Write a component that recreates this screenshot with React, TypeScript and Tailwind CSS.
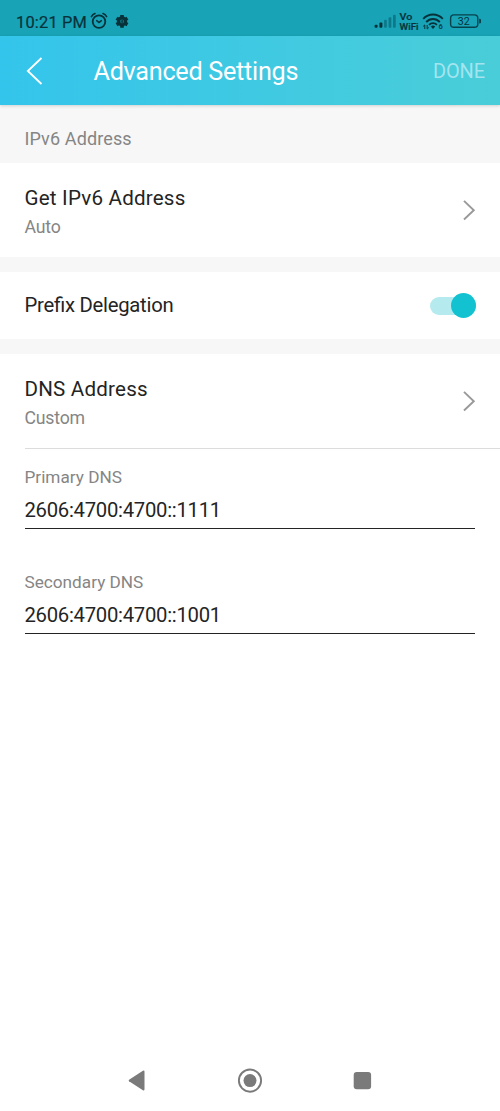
import React from 'react';

function StatusIcons() {
  return (
    <svg className="block" width="112" height="36" viewBox="372 0 112 36" fill="none">
      <g fill="#07323a">
        <rect x="374.6" y="24.8" width="3" height="3" rx="1" />
        <rect x="379.4" y="22.6" width="3" height="5.2" rx="1" />
      </g>
      <g fill="#0d7888">
        <rect x="384.1" y="19.8" width="2.7" height="8" rx="1" />
        <rect x="388.6" y="17.2" width="2.7" height="10.6" rx="1" />
        <rect x="393" y="14.8" width="2.7" height="13" rx="1" />
      </g>
      <g fill="#07323a" fontFamily="Roboto, sans-serif" fontWeight="500">
        <text x="399.6" y="19.6" fontSize="9.6" textLength="12.8" lengthAdjust="spacingAndGlyphs" stroke="#07323a" strokeWidth=".2">Vo</text>
        <text x="399.6" y="29.6" fontSize="9.4" textLength="19" lengthAdjust="spacingAndGlyphs" stroke="#07323a" strokeWidth=".2">WiFi</text>
        <text x="438.6" y="29.2" fontSize="7.5">6</text>
      </g>
      <g stroke="#07323a" strokeWidth="1.9">
        <path d="M423.2 18.9C428.8 13.1 437.2 13.1 442.8 18.9" />
        <path d="M426.2 22C430 17.9 436 17.9 439.8 22" />
        <path d="M429.1 24.9C431.3 22.5 434.7 22.5 436.9 24.9" />
      </g>
      <path d="M430.8 26.4Q433 24.8 435.2 26.4L433 29Z" fill="#07323a" />
      <path d="M424.8 29v-4M423.2 26.4l1.6-1.5M427.2 25v4M428.8 27.5l-1.6 1.5" stroke="#07323a" strokeWidth="1" />
      <rect x="450.6" y="14.9" width="27.2" height="12.4" rx="3.4" stroke="#07424c" strokeWidth="1.4" />
      <path d="M479.2 18.8q1.8 0 1.8 1v2.6q0 1-1.8 1z" fill="#07424c" />
      <text x="463.8" y="25.4" textAnchor="middle" fontSize="11.8" textLength="12" lengthAdjust="spacingAndGlyphs" fontFamily="Roboto, sans-serif" fill="#07323a">32</text>
    </svg>
  );
}

function ClockAndGear() {
  return (
    <svg className="block" width="42" height="36" viewBox="89 0 42 36" fill="none">
      <g stroke="#07323a" strokeLinecap="round">
        <circle cx="99" cy="21.6" r="6.3" strokeWidth="1.8" />
        <path d="M96.7 20.6l2.3 2 2.4-2" strokeWidth="1.4" />
        <path d="M91.4 16.6q1.3-2.2 3.6-3.1M106.6 16.6q-1.3-2.2-3.6-3.1" strokeWidth="1.6" />
      </g>
      <g stroke="#07323a" strokeWidth="3.6">
        <path d="M122 15v12.8M116.5 18.2l11 6.4M127.5 18.2l-11 6.4" />
      </g>
      <circle cx="122" cy="21.4" r="5.1" fill="#07323a" />
      <circle cx="122" cy="21.4" r="1.9" fill="#128394" />
      <path d="M120.8 22.3l1.6-2.4v3.2M120.8 22h2.4" stroke="#07323a" strokeWidth=".7" />
    </svg>
  );
}

function Chevron() {
  return (
    <svg width="14" height="22" viewBox="0 0 14 22" fill="none" stroke="#999" strokeWidth="1.9">
      <path d="M2 1.9L11.8 11.2L2 20.5" />
    </svg>
  );
}

function LinkRow({ title, value }: { title: string; value: string }) {
  return (
    <div className="flex h-[94px] items-center justify-between bg-white pr-[24.5px] pl-[24.5px]">
      <div className="pt-[4px]">
        <div className="text-[20.6px] leading-[30px] tracking-[0.2px] text-[#242424]">{title}</div>
        <div className="text-[17.7px] leading-[28px] tracking-[-0.2px] text-[#858585]">{value}</div>
      </div>
      <Chevron />
    </div>
  );
}

function Field({ label, value }: { label: string; value: string }) {
  return (
    <div className="mr-[25px] ml-[24.5px]">
      <div className="text-[17.2px] leading-[26px] text-[#858585]">{label}</div>
      <div className="h-[39px] border-b border-[#242424] text-[20.3px] leading-[41px] tracking-[-0.28px] text-[#242424]">{value}</div>
    </div>
  );
}

export default function App() {
  return (
    <div className="flex h-[1111px] w-[500px] flex-col overflow-hidden bg-white font-[Roboto,sans-serif]">
      <div className="flex h-9 shrink-0 justify-between bg-[#18a3b7] pr-4 pl-4">
        <div className="flex">
          <span className="w-[73px] pt-[9px] text-[16.4px] leading-7 tracking-[0.2px] whitespace-nowrap text-[#07323a] [-webkit-text-stroke:0.2px_#07323a]">10:21 PM</span>
          <ClockAndGear />
        </div>
        <StatusIcons />
      </div>
      <header className="z-10 flex h-[69px] shrink-0 items-center bg-linear-to-r from-[#34c5ec] to-[#49cdd8] pr-[15px] pl-[25px] shadow-[0_1px_3px_rgba(0,0,0,0.16)]">
        <svg width="18" height="28" viewBox="0 0 18 28" fill="none" stroke="white" strokeWidth="1.8">
          <path d="M16.5 1L2.8 14L16.5 27" />
        </svg>
        <h1 className="ml-[50.5px] flex-1 pt-[2px] text-[25.2px] leading-8 tracking-[-0.27px] text-white">Advanced Settings</h1>
        <span className="text-[20px] leading-8 tracking-[-0.1px] text-[#a2e5ef]">DONE</span>
      </header>
      <div className="h-[58px] shrink-0 bg-[#f7f7f7] pt-[19px] pl-[24.5px] text-[18px] leading-[30px] tracking-[0.12px] text-[#858585]">IPv6 Address</div>
      <LinkRow title="Get IPv6 Address" value="Auto" />
      <div className="h-[15px] shrink-0 bg-[#f7f7f7]" />
      <div className="flex h-[67px] shrink-0 items-center justify-between pr-[24.5px] pl-[24.5px]">
        <span className="text-[20.3px] tracking-[-0.26px] text-[#242424]">Pre&#xFB01;x Delegation</span>
        <div className="flex h-[18px] w-[46px] items-center justify-end rounded-full bg-[#b5ebef]">
          <div className="size-[25px] shrink-0 rounded-full bg-[#12c2d1]" />
        </div>
      </div>
      <div className="h-[15px] shrink-0 bg-[#f7f7f7]" />
      <LinkRow title="DNS Address" value="Custom" />
      <div className="ml-[24.5px] h-px shrink-0 bg-[#dcdcdc]" />
      <div className="flex flex-col gap-10 pt-[15px]">
        <Field label="Primary DNS" value="2606:4700:4700::1111" />
        <Field label="Secondary DNS" value="2606:4700:4700::1001" />
      </div>
      <nav className="mt-auto flex h-[61px] shrink-0 items-center justify-center gap-[88px] text-[#7a7a7a]">
        <svg width="24" height="26" viewBox="0 0 24 26" fill="currentColor">
          <path d="M4.1 11.7Q3.2 12.5 4.1 13.3L17.9 22.2Q19.5 23 19.5 21.3V3.7Q19.5 2 17.9 2.8Z" />
        </svg>
        <svg width="26" height="26" viewBox="0 0 26 26" fill="none">
          <circle cx="13" cy="12.6" r="11.1" stroke="currentColor" strokeWidth="1.9" />
          <circle cx="13" cy="12.6" r="6.5" fill="currentColor" />
        </svg>
        <svg width="24" height="26" viewBox="0 0 24 26" fill="currentColor">
          <rect x="2.7" y="4" width="17.4" height="17.2" rx="3" />
        </svg>
      </nav>
    </div>
  );
}
